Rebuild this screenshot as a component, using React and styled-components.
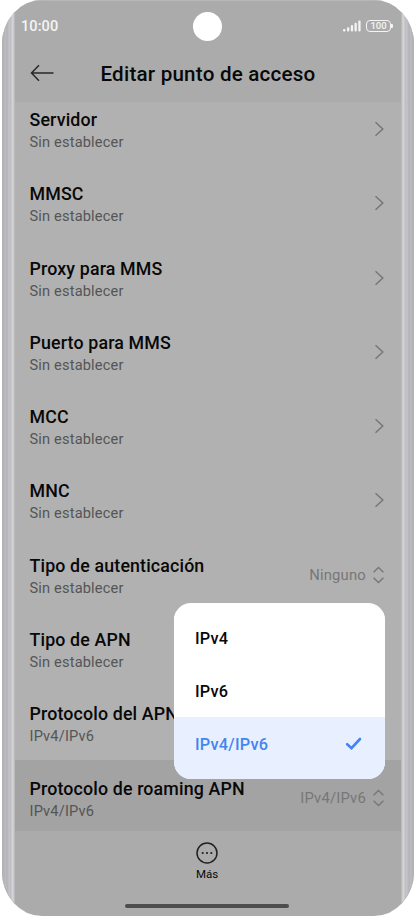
import React, { useState } from "react";
import styled, { createGlobalStyle } from "styled-components";

const GlobalStyle = createGlobalStyle`
  * {
    box-sizing: border-box;
    margin: 0;
    padding: 0;
  }

  body {
    background: #fff;
    font-family: Roboto, "Liberation Sans", sans-serif;
    color: #080808;
    overflow: hidden;
  }

  button {
    border: none;
    background: none;
    font: inherit;
    color: inherit;
    cursor: pointer;
  }
`;

const Phone = styled.div`
  position: relative;
  display: grid;
  grid-template-columns: 13px 1fr 13px;
  width: 412px;
  height: 916px;
  margin-left: 2px;
  border-radius: 40px / 44px;
  background: #ababab;
  overflow: hidden;
`;

// metal edge of the phone body
const Rail = styled.div`
  background: linear-gradient(
    ${(props) => (props.$right ? "to left" : "to right")},
    #b0b0b3 0,
    #b6b6ba 2px,
    #bdbdc1 4px,
    #b0b0b4 5px,
    #bebec3 6px,
    #c3c3c8 8px,
    #bcbcc0 9px,
    #d4d4da 10px,
    #d2d2d6 11px,
    #b4b4b5 13px
  );
`;

const Screen = styled.main`
  display: grid;
  grid-template-rows: 102px 729px 85px;
  min-width: 0;
  box-shadow: inset 0 1px #b8b8b8;
`;

const StatusBar = styled.div`
  display: grid;
  grid-template-columns: 1fr 30px 1fr;
  align-items: center;
  height: 52px;
  padding: 0 8px 0 7px;
  color: #f4f4f4;

  time {
    margin-left: -1px;
    font-size: 14.5px;
    font-weight: 500;
    letter-spacing: 0.1px;
  }
`;

const Camera = styled.span`
  width: 29px;
  height: 29px;
  border-radius: 50%;
  background: #fff;
`;

const StatusIcons = styled.div`
  display: flex;
  justify-content: flex-end;
  align-items: center;
  gap: 5px;
`;

const Battery = styled.span`
  display: flex;
  align-items: center;

  b {
    width: 25px;
    height: 12px;
    border: 1px solid #f4f4f4;
    border-radius: 4px;
    font-size: 9.5px;
    font-weight: 500;
    line-height: 10.5px;
    text-align: center;
  }

  i {
    width: 2px;
    height: 4px;
    border-radius: 0 1px 1px 0;
    background: #f4f4f4;
  }
`;

const TitleBar = styled.div`
  display: grid;
  grid-template-columns: 54px 1fr 54px;
  align-items: center;
  height: 42px;

  button {
    display: flex;
    padding-left: 15px;
  }

  h1 {
    padding-top: 1px;
    font-size: 20.6px;
    font-weight: 500;
    letter-spacing: 0.22px;
    text-align: center;
    white-space: nowrap;
  }
`;

const List = styled.ul`
  background: #b1b1b1;
  list-style: none;
  overflow: hidden;

  li:first-child {
    margin-top: -11px;
  }
`;

const Row = styled.li`
  display: flex;
  justify-content: space-between;
  height: 74.3px;
  padding: 17px 17px 0 14.5px;
  background: ${(props) => (props.$active ? "#a3a3a3" : "transparent")};

  h2 {
    font-size: 17.8px;
    font-weight: 500;
    letter-spacing: 0.15px;
    line-height: 23px;
  }

  p {
    font-size: 14.6px;
    letter-spacing: 0.17px;
    line-height: 22px;
    color: #555;
  }
`;

const Value = styled.div`
  display: flex;
  align-items: center;
  gap: 7px;
  height: 42px;
  font-size: 14.8px;
  letter-spacing: 0.2px;
  color: #777;
`;

const Footer = styled.footer`
  display: flex;
  flex-direction: column;
  align-items: center;
  padding: 11px 2px 0 0;

  button {
    display: flex;
    flex-direction: column;
    align-items: center;
    gap: 3px;
    font-size: 11.5px;
    line-height: 14px;
  }
`;

const HomeBar = styled.div`
  width: 164px;
  height: 4px;
  margin-top: 23px;
  border-radius: 2px;
  background: #4d4d4d;
`;

const Menu = styled.ul`
  position: absolute;
  top: 603px;
  left: 172px;
  width: 211px;
  height: 176px;
  padding-top: 9px;
  border-radius: 17px;
  background: #fff;
  list-style: none;
  overflow: hidden;
`;

const Option = styled.li`
  display: flex;
  justify-content: space-between;
  align-items: center;
  height: ${(props) => (props.$selected ? "62px" : "52.6px")};
  padding: ${(props) => (props.$selected ? "0 23px 8px 21px" : "1px 23px 0 21px")};
  background: ${(props) => (props.$selected ? "#e8f0ff" : "#fff")};
  color: ${(props) => (props.$selected ? "#4285f0" : "#080808")};
  font-size: 16.3px;
  font-weight: 500;
  letter-spacing: 0.22px;
  cursor: pointer;
`;

const BackIcon = () => (
  <svg width="24" height="18" viewBox="0 0 24 18" fill="none" stroke="#292929" strokeWidth="1.5">
    <path d="M23.5 9H1.7M9 1.2L1.5 9L9 16.8" />
  </svg>
);

const SignalIcon = () => (
  <svg width="18" height="12" viewBox="0 0 18 12" fill="#f4f4f4">
    <rect x="0" y="9" width="2.5" height="2.5" rx="1" />
    <rect x="4" y="7.2" width="2.3" height="4.3" rx="1" />
    <rect x="7.8" y="5" width="2.3" height="6.5" rx="1" />
    <rect x="11.5" y="2.8" width="2.3" height="8.7" rx="1" />
    <rect x="15.3" y="0.5" width="2.3" height="11" rx="1" />
  </svg>
);

const ChevronIcon = () => (
  <svg width="10" height="16" viewBox="0 0 10 16" fill="none" stroke="#777" strokeWidth="1.5">
    <path d="M1.5 1.2L8.8 8L1.5 14.8" />
  </svg>
);

const UpDownIcon = () => (
  <svg width="11" height="18" viewBox="0 0 11 18" fill="none" stroke="#777" strokeWidth="1.4">
    <path d="M0.6 6.3L5.5 1.5L10.4 6.3M0.6 11.7L5.5 16.5L10.4 11.7" />
  </svg>
);

const CheckIcon = () => (
  <svg width="17" height="14" viewBox="0 0 17 14" fill="none" stroke="#4285f0" strokeWidth="2.6">
    <path d="M2.2 7.2L6.5 11.2L15 2" strokeLinecap="round" />
  </svg>
);

const MoreIcon = () => (
  <svg width="22" height="22" viewBox="0 0 22 22">
    <circle cx="11" cy="11" r="10" fill="none" stroke="#202020" strokeWidth="1.5" />
    <g fill="#202020">
      <circle cx="6.7" cy="11" r="1.1" />
      <circle cx="11" cy="11" r="1.1" />
      <circle cx="15.3" cy="11" r="1.1" />
    </g>
  </svg>
);

const settings = [
  { title: "Servidor" },
  { title: "MMSC" },
  { title: "Proxy para MMS" },
  { title: "Puerto para MMS" },
  { title: "MCC" },
  { title: "MNC" },
  { title: "Tipo de autenticación", value: "Ninguno" },
  { title: "Tipo de APN" },
  { title: "Protocolo del APN", text: "IPv4/IPv6", value: "IPv4/IPv6" },
];

const protocols = ["IPv4", "IPv6", "IPv4/IPv6"];

const Setting = ({ title, text = "Sin establecer", value, active }) => (
  <Row $active={active}>
    <div>
      <h2>{title}</h2>
      <p>{text}</p>
    </div>
    <Value>
      {value}
      {value ? <UpDownIcon /> : <ChevronIcon />}
    </Value>
  </Row>
);

const App = () => {
  const [roaming, setRoaming] = useState("IPv4/IPv6");

  return (
    <>
      <GlobalStyle />
      <Phone>
        <Rail />
        <Screen>
          <header>
            <StatusBar>
              <time>10:00</time>
              <Camera />
              <StatusIcons>
                <SignalIcon />
                <Battery>
                  <b>100</b>
                  <i />
                </Battery>
              </StatusIcons>
            </StatusBar>
            <TitleBar>
              <button aria-label="Atrás">
                <BackIcon />
              </button>
              <h1>Editar punto de acceso</h1>
            </TitleBar>
          </header>
          <List>
            {settings.map((setting) => (
              <Setting key={setting.title} {...setting} />
            ))}
            <Setting title="Protocolo de roaming APN" text={roaming} value={roaming} active />
          </List>
          <Footer>
            <button>
              <MoreIcon />
              Más
            </button>
            <HomeBar />
          </Footer>
        </Screen>
        <Rail $right />
        <Menu>
          {protocols.map((name) => (
            <Option key={name} $selected={name === roaming} onClick={() => setRoaming(name)}>
              {name}
              {name === roaming && <CheckIcon />}
            </Option>
          ))}
        </Menu>
      </Phone>
    </>
  );
};

export default App;
